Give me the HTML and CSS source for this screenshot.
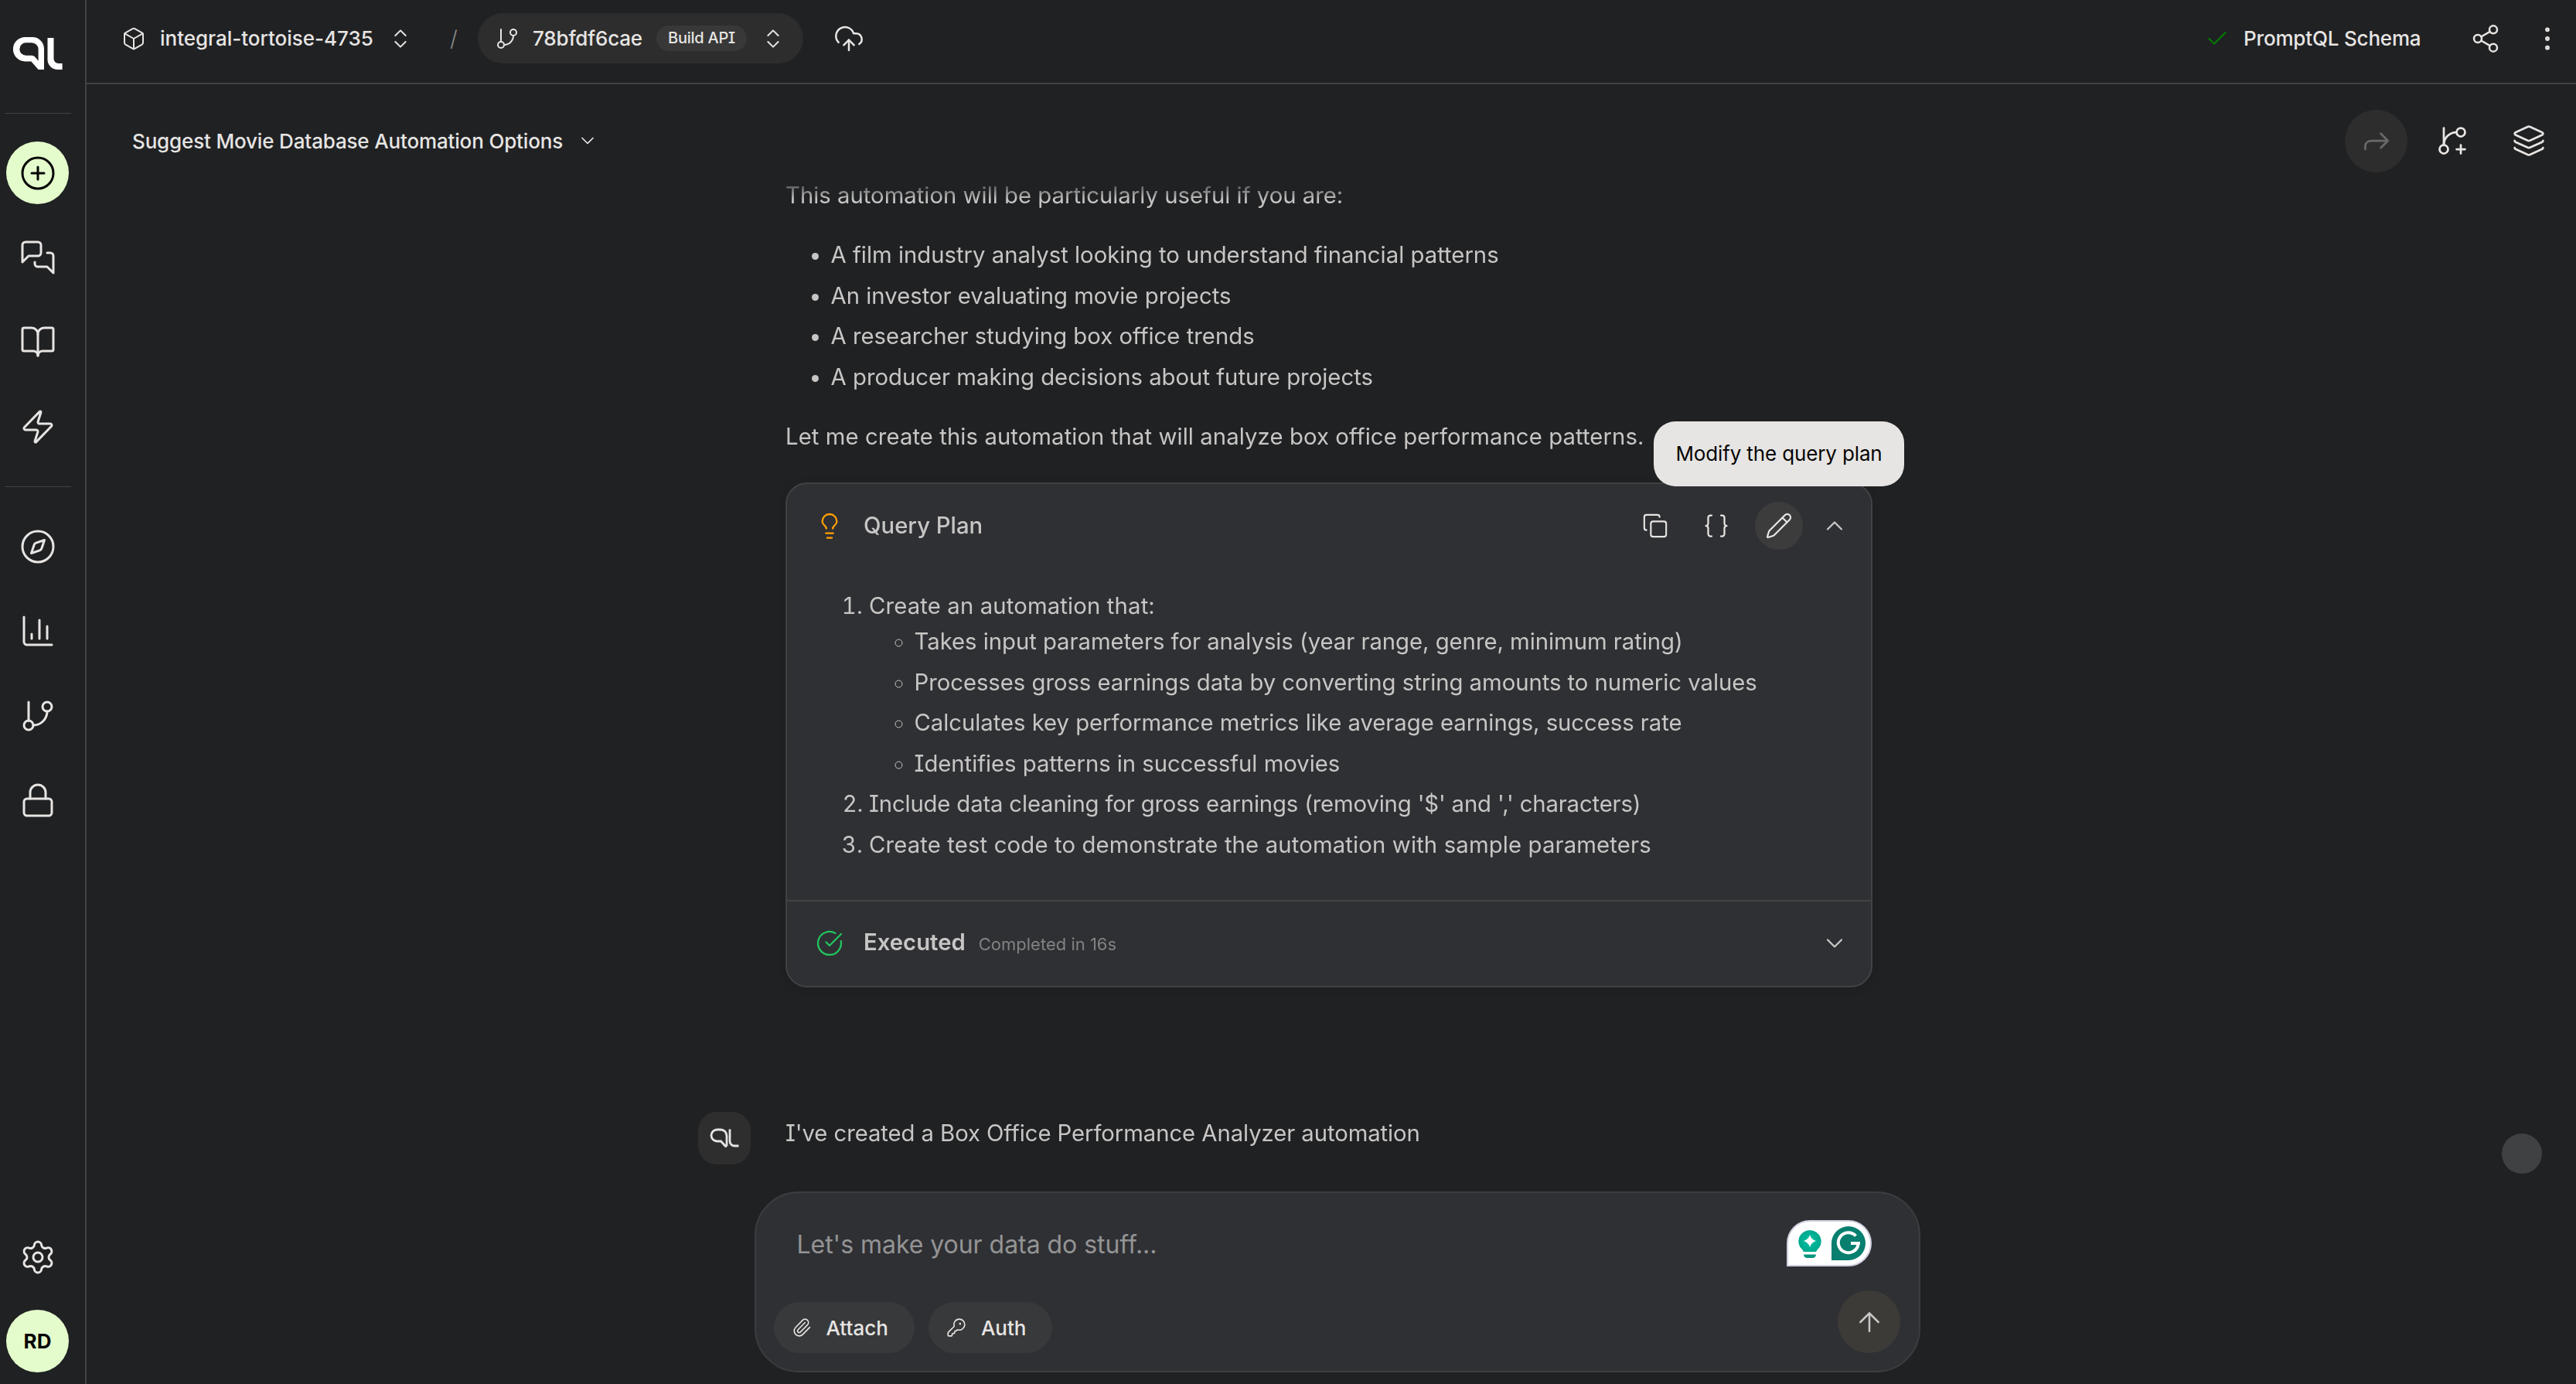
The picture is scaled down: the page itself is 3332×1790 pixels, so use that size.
FILE: index.html
```html
<!DOCTYPE html>
<html lang="en">
<head>
<meta charset="utf-8">
<title>PromptQL</title>
<link rel="stylesheet" href="styles.css">
</head>
<body>
<svg class="defs" aria-hidden="true">
  <symbol id="branch" viewBox="0 0 24 24"><path d="M6 3v12"/><circle cx="18" cy="6" r="3"/><circle cx="6" cy="18" r="3"/><path d="M18 9a9 9 0 0 1-9 9"/></symbol>
  <symbol id="updown" viewBox="0 0 24 24"><path d="m7 15 5 5 5-5M7 9l5-5 5 5"/></symbol>
  <symbol id="down" viewBox="0 0 24 24"><path d="m6 9 6 6 6-6"/></symbol>
</svg>
<div class="app">
  <aside class="sidebar">
    <svg class="logo" viewBox="0 0 64 42"><path fill="currentColor" fill-rule="evenodd" d="M15.6 0H25a15 15 0 0 1 15 15V42H32.6L23.4 31.4H15.6A15.7 15.7 0 0 1 15.6 0ZM16.5 7.3a8.2 8.2 0 0 0 0 16.4H24Q26.6 23.7 28.2 25.6L32.6 30.7V15.9A8.6 8.6 0 0 0 24 7.3ZM44.5 1H52.5V28a6 6 0 0 0 6 6H63.6V42H57.5A13 13 0 0 1 44.5 29Z"/></svg>
    <hr>
    <nav>
      <a class="item round"><svg class="icon i48" viewBox="0 0 24 24"><circle cx="12" cy="12" r="10"/><path d="M8 12h8M12 8v8"/></svg></a>
      <a class="item"><svg class="icon i48" viewBox="0 0 24 24"><path d="M14 9a2 2 0 0 1-2 2H6l-4 4V4a2 2 0 0 1 2-2h8a2 2 0 0 1 2 2z"/><path d="M18 9h2a2 2 0 0 1 2 2v11l-4-4h-6a2 2 0 0 1-2-2v-1"/></svg></a>
      <a class="item"><svg class="icon i48" viewBox="0 0 24 24"><path d="M12 7v14"/><path d="M3 18a1 1 0 0 1-1-1V4a1 1 0 0 1 1-1h5a4 4 0 0 1 4 4 4 4 0 0 1 4-4h5a1 1 0 0 1 1 1v13a1 1 0 0 1-1 1h-6a3 3 0 0 0-3 3 3 3 0 0 0-3-3z"/></svg></a>
      <a class="item"><svg class="icon i48" viewBox="0 0 24 24"><path d="M4 14a1 1 0 0 1-.78-1.63l9.9-10.2a.5.5 0 0 1 .86.46l-1.92 6.02A1 1 0 0 0 13 10h7a1 1 0 0 1 .78 1.63l-9.9 10.2a.5.5 0 0 1-.86-.46l1.92-6.02A1 1 0 0 0 11 14z"/></svg></a>
    </nav>
    <hr>
    <nav>
      <a class="item"><svg class="icon i48" viewBox="0 0 24 24"><circle cx="12" cy="12" r="10"/><path d="m16.24 7.76-1.804 5.411a2 2 0 0 1-1.265 1.265L7.76 16.24l1.804-5.411a2 2 0 0 1 1.265-1.265z"/></svg></a>
      <a class="item"><svg class="icon i48" viewBox="0 0 24 24"><path d="M3 3v16a2 2 0 0 0 2 2h16M18 17V9M13 17V5M8 17v-3"/></svg></a>
      <a class="item"><svg class="icon i48"><use href="#branch"/></svg></a>
      <a class="item"><svg class="icon i48" viewBox="0 0 24 24"><rect x="3" y="11" width="18" height="11" rx="2"/><path d="M7 11V7a5 5 0 0 1 10 0v4"/></svg></a>
    </nav>
    <nav class="bottom">
      <a class="item"><svg class="icon i48" viewBox="0 0 24 24"><path d="M9.671 4.136a2.34 2.34 0 0 1 4.659 0 2.34 2.34 0 0 0 3.319 1.915 2.34 2.34 0 0 1 2.33 4.033 2.34 2.34 0 0 0 0 3.831 2.34 2.34 0 0 1-2.33 4.033 2.34 2.34 0 0 0-3.319 1.915 2.34 2.34 0 0 1-4.659 0 2.34 2.34 0 0 0-3.32-1.915 2.34 2.34 0 0 1-2.33-4.033 2.34 2.34 0 0 0 0-3.831A2.34 2.34 0 0 1 6.35 6.051a2.34 2.34 0 0 0 3.319-1.915"/><circle cx="12" cy="12" r="3"/></svg></a>
      <a class="item round">RD</a>
    </nav>
  </aside>

  <main class="main">
    <header class="topbar">
      <svg class="icon i32" viewBox="0 0 24 24"><path d="M21 8a2 2 0 0 0-1-1.73l-7-4a2 2 0 0 0-2 0l-7 4A2 2 0 0 0 3 8v8a2 2 0 0 0 1 1.73l7 4a2 2 0 0 0 2 0l7-4A2 2 0 0 0 21 16Z"/><path d="m3.3 7 8.7 5 8.7-5M12 22V12"/></svg>
      <span class="project">integral-tortoise-4735</span>
      <svg class="icon i32"><use href="#updown"/></svg>
      <span class="slash">/</span>
      <div class="build">
        <svg class="icon i32"><use href="#branch"/></svg>
        <span class="hash">78bfdf6cae</span>
        <span class="badge">Build API</span>
        <svg class="icon i32"><use href="#updown"/></svg>
      </div>
      <svg class="icon i40 cloud" viewBox="0 0 24 24"><path d="M12 13v8"/><path d="M4 14.899A7 7 0 1 1 15.71 8h1.79a4.5 4.5 0 0 1 2.5 8.242"/><path d="m8 17 4-4 4 4"/></svg>
      <div class="right">
        <svg class="icon i32 ok" viewBox="0 0 24 24"><path d="M20 6 9 17l-5-5"/></svg>
        <span class="schema">PromptQL Schema</span>
        <svg class="icon i40 share" viewBox="0 0 24 24"><circle cx="18" cy="5" r="3"/><circle cx="6" cy="12" r="3"/><circle cx="18" cy="19" r="3"/><path d="m8.59 13.51 6.83 3.98M15.41 6.51l-6.82 3.98"/></svg>
        <svg class="icon i40" viewBox="0 0 24 24"><circle cx="12" cy="12" r="1"/><circle cx="12" cy="5" r="1"/><circle cx="12" cy="19" r="1"/></svg>
      </div>
    </header>

    <div class="chatbar">
      <span class="title">Suggest Movie Database Automation Options</span>
      <svg class="icon i28"><use href="#down"/></svg>
      <div class="actions">
        <span class="forward"><svg class="icon i44" viewBox="0 0 24 24"><path d="m15 17 5-5-5-5"/><path d="M4 18v-2a4 4 0 0 1 4-4h12"/></svg></span>
        <svg class="icon i44 plus" viewBox="0 0 24 24"><path d="M6 3v12"/><circle cx="18" cy="6" r="3"/><circle cx="6" cy="18" r="3"/><path d="M15 6a9 9 0 0 0-9 9M18 15v6M21 18h-6"/></svg>
        <svg class="icon i44" viewBox="0 0 24 24"><path d="M12.83 2.18a2 2 0 0 0-1.66 0L2.6 6.08a1 1 0 0 0 0 1.83l8.58 3.91a2 2 0 0 0 1.66 0l8.58-3.9a1 1 0 0 0 0-1.83z"/><path d="M2 12a1 1 0 0 0 .58.91l8.6 3.91a2 2 0 0 0 1.65 0l8.58-3.9A1 1 0 0 0 22 12"/><path d="M2 17a1 1 0 0 0 .58.91l8.6 3.91a2 2 0 0 0 1.65 0l8.58-3.9A1 1 0 0 0 22 17"/></svg>
      </div>
    </div>

    <section class="thread">
      <article class="message">
        <div class="content">
          <p>This automation will be particularly useful if you are:</p>
          <ul>
            <li>A film industry analyst looking to understand financial patterns</li>
            <li>An investor evaluating movie projects</li>
            <li>A researcher studying box office trends</li>
            <li>A producer making decisions about future projects</li>
          </ul>
          <p class="loose">Let me create this automation that will analyze box office performance patterns.</p>
          <div class="card">
            <div class="card-head">
              <svg class="bulb" viewBox="0 0 36 36"><path d="M13.8 22.6V20.4C12.6 17.8 8.6 16.2 8.6 12.4A9.4 9.4 0 0 1 27.4 12.4C27.4 16.2 23.4 17.8 22.2 20.4V22.6M12.4 27.6H23.6M14 33.6H22"/></svg>
              <span class="label">Query Plan</span>
              <div class="tools">
                <svg class="icon i34" viewBox="0 0 24 24"><rect x="8" y="8" width="14" height="14" rx="2"/><path d="M4 16c-1.1 0-2-.9-2-2V4c0-1.1.9-2 2-2h10c1.1 0 2 .9 2 2"/></svg>
                <svg class="icon i36 braces" viewBox="0 0 24 24"><path d="M8 3H7a2 2 0 0 0-2 2v5a2 2 0 0 1-2 2 2 2 0 0 1 2 2v5c0 1.1.9 2 2 2h1M16 21h1a2 2 0 0 0 2-2v-5c0-1.1.9-2 2-2a2 2 0 0 1-2-2V5a2 2 0 0 0-2-2h-1"/></svg>
                <span class="edit">
                  <svg class="icon i36" viewBox="0 0 24 24"><path d="M21.174 6.812a1 1 0 0 0-3.986-3.987L3.842 16.174a2 2 0 0 0-.5.83l-1.321 4.352a.5.5 0 0 0 .623.622l4.353-1.32a2 2 0 0 0 .83-.497zM15 5l4 4"/></svg>
                  <span class="tooltip">Modify the query plan</span>
                </span>
                <svg class="icon i36 toggle" viewBox="0 0 24 24"><path d="m18 15-6-6-6 6"/></svg>
              </div>
            </div>
            <div class="card-body">
              <ol>
                <li class="looser">Create an automation that:
                  <ul>
                    <li>Takes input parameters for analysis (year range, genre, minimum rating)</li>
                    <li>Processes gross earnings data by converting string amounts to numeric values</li>
                    <li>Calculates key performance metrics like average earnings, success rate</li>
                    <li>Identifies patterns in successful movies</li>
                  </ul>
                </li>
                <li class="tight">Include data cleaning for gross earnings (removing '$' and ',' characters)</li>
                <li class="looser">Create test code to demonstrate the automation with sample parameters</li>
              </ol>
            </div>
            <div class="card-foot">
              <svg class="icon i36 done" viewBox="0 0 24 24"><path d="M21.801 10A10 10 0 1 1 17 3.335"/><path d="m9 11 3 3L22 4"/></svg>
              <div class="status"><span class="executed">Executed</span><span class="time">Completed in 16s</span></div>
              <svg class="icon i36 toggle" viewBox="0 0 24 24"><path d="m6 9 6 6 6-6"/></svg>
            </div>
          </div>
        </div>
      </article>
      <article class="message next">
        <div class="avatar"><svg viewBox="0 0 38 25"><path d="M22 23.5V10A8 8 0 0 0 14 2H9.5A7.5 7.5 0 0 0 9.5 17H14.5L20.5 23.5H22M26 1.5V17A6 6 0 0 0 32 23H37.5"/></svg></div>
        <div class="content"><p>I've created a Box Office Performance Analyzer automation</p></div>
      </article>
    </section>

    <section class="composer">
      <p class="placeholder">Let's make your data do stuff...</p>
      <div class="row">
        <span class="chip"><svg class="icon i26" viewBox="0 0 24 24"><path d="m16 6-8.414 8.586a2 2 0 0 0 2.829 2.829l8.414-8.586a4 4 0 1 0-5.657-5.657l-8.379 8.551a6 6 0 1 0 8.485 8.485l8.379-8.551"/></svg>Attach</span>
        <span class="chip"><svg class="icon i26" viewBox="0 0 24 24"><path d="M2.586 17.414A2 2 0 0 0 2 18.828V21a1 1 0 0 0 1 1h3a1 1 0 0 0 1-1v-1a1 1 0 0 1 1-1h1a1 1 0 0 0 1-1v-1a1 1 0 0 1 1-1h.172a2 2 0 0 0 1.414-.586l.814-.814a6.5 6.5 0 1 0-4-4z"/><circle cx="16.5" cy="7.5" r=".5" fill="currentColor"/></svg>Auth</span>
        <span class="send"><svg class="icon i40" viewBox="0 0 24 24"><path d="m5 12 7-7 7 7M12 19V5"/></svg></span>
      </div>
      <svg class="assistant" viewBox="0 0 110 60">
        <path d="M1 59V30A29 29 0 0 1 30 1H80A29 29 0 0 1 80 59Z" fill="#fff" stroke="#cfd0e0" stroke-width="2"/>
        <radialGradient id="glow"><stop offset="0" stop-color="#00c2a4"/><stop offset="1" stop-color="#00a88c"/></radialGradient>
        <path fill="url(#glow)" d="M30 13a15 14.5 0 0 1 9.5 25.5L38 41H22l-1.5-2.5A15 14.5 0 0 1 30 13Z"/>
        <path fill="#00957d" d="M22 44.5H38A5 5 0 0 1 33 49H27A5 5 0 0 1 22 44.5Z"/>
        <path fill="#fff" d="M30 19q1.8 6.2 8 8-6.2 1.8-8 8-1.8-6.2-8-8 6.2-1.8 8-8Z"/>
        <path fill="#087f6f" d="M58 52V30A22 22 0 1 1 80 52Z"/>
        <path fill="none" stroke="#fff" stroke-width="4" d="M89.5 20.5A13 13 0 1 0 92.5 32M94.5 30H83"/>
        <path fill="#fff" d="M83.5 31.5 86 28H95V31.5Z"/>
      </svg>
    </section>
    <span class="bubble"></span>
  </main>
</div>
</body>
</html>
```
FILE: styles.css
```css
* { box-sizing: border-box; }
body {
  margin: 0;
  background: #202123;
  color: #e7e5e3;
  font-family: Inter, sans-serif;
  font-size: 26px;
  font-feature-settings: "cv08";
}
p, ul, ol { margin: 0; padding: 0; }
.defs { position: absolute; width: 0; height: 0; }
.app { display: flex; width: 3332px; height: 1790px; overflow: hidden; }

.icon {
  display: block;
  flex: none;
  overflow: visible;
  fill: none;
  stroke: currentColor;
  stroke-width: 1.5;
  stroke-linecap: round;
  stroke-linejoin: round;
}
.i26 { width: 26px; height: 26px; }
.i28 { width: 28px; height: 28px; }
.i32 { width: 32px; height: 32px; }
.i34 { width: 34px; height: 34px; }
.i36 { width: 36px; height: 36px; }
.i40 { width: 40px; height: 40px; }
.i44 { width: 44px; height: 44px; }
.i48 { width: 48px; height: 48px; }

/* sidebar */
.sidebar {
  flex: none;
  width: 112px;
  padding: 48px 12px 15px 0;
  border-right: 2px solid #414243;
  display: flex;
  flex-direction: column;
  align-items: center;
}
.logo { width: 64px; height: 42px; color: #fff; margin-bottom: 20px; }
.sidebar hr { flex: none; width: 86px; height: 1px; margin: 36px 0; border: 0; background: #414243; }
.sidebar nav { display: flex; flex-direction: column; gap: 27.5px; }
.item { width: 82px; height: 82px; display: flex; align-items: center; justify-content: center; }
.round { width: 81px; height: 81px; border-radius: 50%; background: #e4fccc; color: #050505; font-weight: 700; }
.bottom { margin-top: auto; }

/* top bar */
.main { flex: 1; min-width: 0; display: flex; flex-direction: column; position: relative; }
.topbar {
  flex: none;
  height: 109px;
  border-bottom: 2px solid #414243;
  padding: 0 17px 8px 45px;
  display: flex;
  align-items: center;
  font-weight: 500;
  white-space: nowrap;
}
.project { margin: 0 18px 0 18px; width: 277px; letter-spacing: -.02px; }
.slash { width: 12px; margin: 0 24px 0 48px; font-size: 28px; font-weight: 300; color: #8a8a8a; }
.build {
  width: 421px;
  height: 65px;
  padding: 0 23px 0 22px;
  border-radius: 33px;
  background: #2d2d2d;
  display: flex;
  align-items: center;
}
.hash { margin: 0 18px 0 17px; width: 142px; letter-spacing: -.18px; }
.badge {
  width: 117px;
  height: 33px;
  line-height: 33px;
  margin-right: 18px;
  border-radius: 17px;
  background: #383838;
  font-size: 20px;
  letter-spacing: -.25px;
  text-align: center;
}
.cloud { margin-left: 39px; }
.right { margin-left: auto; display: flex; align-items: center; }
.ok { color: #008000; }
.schema { margin: 0 63px 0 18px; width: 230px; letter-spacing: -.18px; }
.share { margin-right: 40px; }

/* chat bar */
.chatbar {
  flex: none;
  height: 117px;
  padding: 29px 39px 0 59px;
  display: flex;
  align-items: center;
  font-weight: 500;
}
.title { width: 557px; margin-right: 18px; letter-spacing: -.16px; white-space: nowrap; }
.actions { margin-left: auto; display: flex; align-items: center; }
.forward {
  width: 81px;
  height: 81px;
  margin-right: 36px;
  border-radius: 50%;
  background: #2d2d2d;
  color: #696969;
  display: flex;
  align-items: center;
  justify-content: center;
}
.plus { margin-right: 55px; }

/* conversation */
.thread {
  flex: 1;
  min-height: 0;
  overflow: hidden;
  padding-top: 1px;
  color: #c7c6c5;
  font-size: 29.3px;
  line-height: 52.5px;
  -webkit-mask-image: linear-gradient(to bottom, transparent 4px, #000 32px);
  mask-image: linear-gradient(to bottom, transparent 4px, #000 32px);
}
.message { display: grid; grid-template-columns: 68px 1406px; column-gap: 45px; padding-left: 791px; }
.message .content { grid-column: 2; }
.loose { letter-spacing: .08px; }
.looser { letter-spacing: .14px; }
.tight { letter-spacing: -.16px; }
.content > ul { margin: 24.5px 0; padding-left: 58.5px; }
.card {
  margin-top: 32.5px;
  height: 653px;
  border: 2px solid #414243;
  border-radius: 28px;
  background: #2f3034;
  box-shadow: 0 2px 12px rgba(0, 0, 0, .1);
}
.card-head, .card-foot { height: 109px; display: flex; align-items: center; padding: 0 29.5px 0 37px; }
.bulb { width: 36px; height: 36px; fill: none; stroke: #ffa200; stroke-width: 2.3; }
.label { margin-left: 26px; font-weight: 500; }
.tools { margin-left: auto; display: flex; align-items: center; color: #e7e5e3; }
.braces { margin: 0 32px 0 44px; }
.edit {
  position: relative;
  width: 62px;
  height: 62px;
  margin-right: 22.5px;
  border-radius: 50%;
  background: #3c3c3d;
  display: flex;
  align-items: center;
  justify-content: center;
}
.tooltip {
  position: absolute;
  left: -131px;
  top: -104px;
  width: 324px;
  height: 84px;
  border-radius: 28px;
  background: #e7e5e3;
  color: #050505;
  font-size: 26px;
  line-height: 84px;
  letter-spacing: -.13px;
  text-align: center;
  white-space: nowrap;
}
.toggle { color: #c9c8c7; }
.card-body { height: 429px; padding: 23.5px 0 0 46px; }
.card-body ol { padding-left: 60px; }
.card-body ul { margin-top: -6.5px; padding-left: 58.5px; letter-spacing: -.04px; }
.card-foot { height: 111px; border-top: 2px solid #414243; }
.done { color: #22c55e; }
.status { margin: 0 auto 0 26px; display: flex; align-items: baseline; gap: 17px; }
.executed { font-weight: 600; }
.time { font-size: 22px; color: #828282; }
.next { padding-top: 161px; }
.avatar { width: 68px; height: 68px; border-radius: 24px; background: #2e2e2f; color: #e7e5e3; display: flex; align-items: center; justify-content: center; }
.avatar svg { width: 38px; height: 25px; fill: none; stroke: currentColor; stroke-width: 2.8; }
.next .content { padding-top: 2px; letter-spacing: -.08px; }

/* composer */
.composer {
  position: relative;
  flex: none;
  width: 1508px;
  height: 234px;
  margin: 0 0 15px 864px;
  padding: 44px 24px 23px 22.5px;
  border: 2px solid #3c3d40;
  border-radius: 57px;
  background: #2f3034;
  display: flex;
  flex-direction: column;
  justify-content: space-between;
}
.placeholder { padding-left: 30px; font-size: 32px; line-height: 46px; letter-spacing: -.04px; color: #949494; }
.row { display: flex; align-items: flex-end; gap: 18px; height: 81px; }
.chip {
  height: 66px;
  padding: 0 34px 0 23px;
  border-radius: 33px;
  background: #38393a;
  display: flex;
  align-items: center;
  gap: 19px;
  font-weight: 500;
}
.send {
  width: 81px;
  height: 81px;
  margin-left: auto;
  border-radius: 50%;
  background: #3d3b38;
  color: #c9c8c7;
  display: flex;
  align-items: center;
  justify-content: center;
}
.assistant { position: absolute; right: 61px; top: 35px; width: 110px; height: 60px; }
.bubble { position: absolute; left: 3124px; top: 1466px; width: 52px; height: 52px; border-radius: 50%; background: #404143; }
```
